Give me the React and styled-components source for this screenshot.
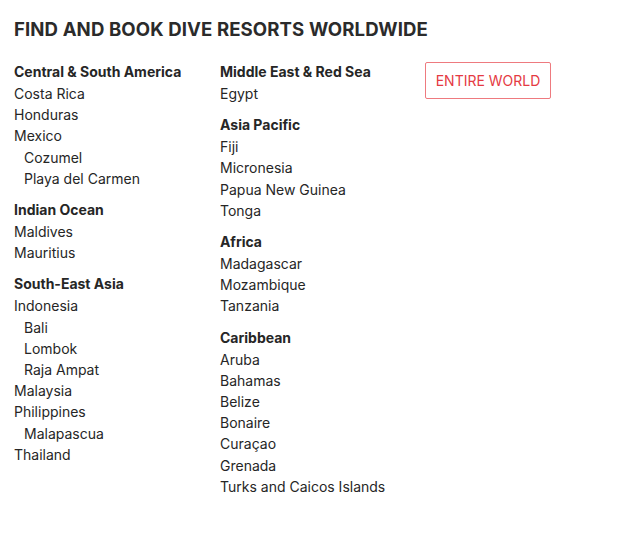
import styled, { createGlobalStyle } from "styled-components";

const GlobalStyle = createGlobalStyle`
  body {
    margin: 0;
    background: #fff;
    font-family: Inter, "Noto Sans", sans-serif;
    color: #262626;
  }
`;

const Page = styled.div`
  padding: 17px 14px 0;
`;

const Title = styled.h1`
  margin: 0 0 20px;
  font-size: 18.6px;
  line-height: 24px;
  font-weight: 700;
  letter-spacing: 0.1px;
  text-transform: uppercase;
  color: #2b2b2b;
`;

const Columns = styled.div`
  display: grid;
  grid-template-columns: 206px 205px auto;
  align-items: start;
`;

const Column = styled.div`
  display: flex;
  flex-direction: column;
`;

const Group = styled.div`
  margin-bottom: 10px;
`;

const Heading = styled.div`
  font-size: 14px;
  line-height: 22px;
  font-weight: 700;
`;

const Item = styled.div`
  font-size: 14px;
  line-height: 21.2px;
  padding-left: ${(p) => (p.$sub ? "10px" : "0")};
  cursor: pointer;
`;

const WorldButton = styled.button`
  justify-self: start;
  margin-top: 1px;
  width: 126px;
  height: 37px;
  border: 1px solid #ee7a7f;
  border-radius: 2px;
  background: #fff;
  color: #e53a43;
  font-family: inherit;
  font-size: 14px;
  text-transform: uppercase;
  cursor: pointer;
`;

const columns = [
  [
    {
      name: "Central & South America",
      items: ["Costa Rica", "Honduras", "Mexico", ["Cozumel"], ["Playa del Carmen"]],
    },
    { name: "Indian Ocean", items: ["Maldives", "Mauritius"] },
    {
      name: "South-East Asia",
      items: [
        "Indonesia",
        ["Bali"],
        ["Lombok"],
        ["Raja Ampat"],
        "Malaysia",
        "Philippines",
        ["Malapascua"],
        "Thailand",
      ],
    },
  ],
  [
    { name: "Middle East & Red Sea", items: ["Egypt"] },
    { name: "Asia Pacific", items: ["Fiji", "Micronesia", "Papua New Guinea", "Tonga"] },
    { name: "Africa", items: ["Madagascar", "Mozambique", "Tanzania"] },
    {
      name: "Caribbean",
      items: ["Aruba", "Bahamas", "Belize", "Bonaire", "Curaçao", "Grenada", "Turks and Caicos Islands"],
    },
  ],
];

export default function App() {
  return (
    <Page>
      <GlobalStyle />
      <Title>Find and book dive resorts worldwide</Title>
      <Columns>
        {columns.map((groups, i) => (
          <Column key={i}>
            {groups.map((g) => (
              <Group key={g.name}>
                <Heading>{g.name}</Heading>
                {g.items.map((it) =>
                  Array.isArray(it) ? (
                    <Item $sub key={it[0]}>{it[0]}</Item>
                  ) : (
                    <Item key={it}>{it}</Item>
                  )
                )}
              </Group>
            ))}
          </Column>
        ))}
        <WorldButton>Entire world</WorldButton>
      </Columns>
    </Page>
  );
}
